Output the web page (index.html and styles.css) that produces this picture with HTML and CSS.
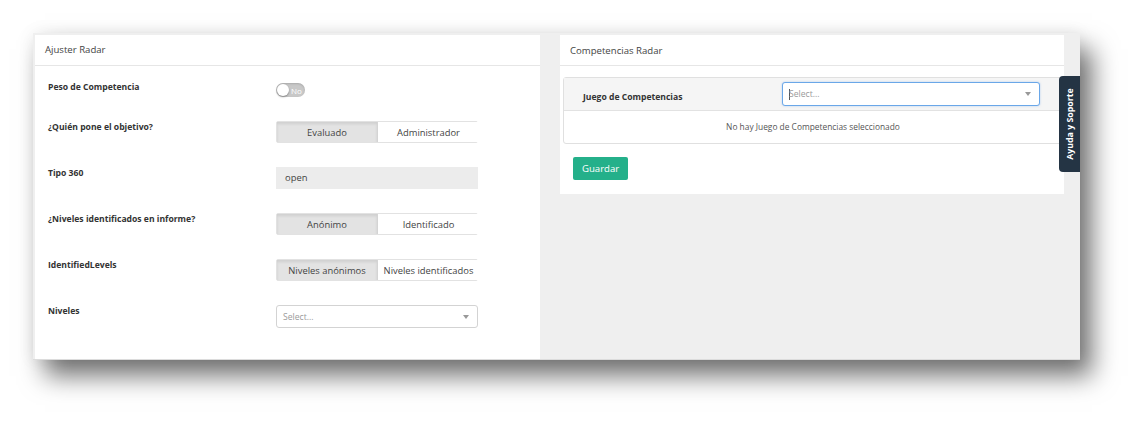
FILE: index.html
```html
<!DOCTYPE html>
<html lang="es">
<head>
<meta charset="utf-8">
<title>Radar</title>
<link rel="stylesheet" href="styles.css">
</head>
<body>
<div class="stage">
  <div class="window">
    <section class="panel panel-left">
      <header class="panel-head">Ajuster Radar</header>
      <div class="panel-body">
        <div class="row row-toggle">
          <div class="label">Peso de Competencia</div>
          <div class="control">
            <span class="toggle"><span class="knob"></span><span class="toggle-text">No</span></span>
          </div>
        </div>
        <div class="row">
          <div class="label">¿Quién pone el objetivo?</div>
          <div class="control btn-group">
            <span class="seg active">Evaluado</span><span class="seg">Administrador</span>
          </div>
        </div>
        <div class="row">
          <div class="label">Tipo 360</div>
          <div class="control readonly">open</div>
        </div>
        <div class="row">
          <div class="label">¿Niveles identificados en informe?</div>
          <div class="control btn-group">
            <span class="seg active">Anónimo</span><span class="seg">Identificado</span>
          </div>
        </div>
        <div class="row">
          <div class="label">IdentifiedLevels</div>
          <div class="control btn-group">
            <span class="seg active">Niveles anónimos</span><span class="seg">Niveles identificados</span>
          </div>
        </div>
        <div class="row">
          <div class="label">Niveles</div>
          <div class="control select"><span class="placeholder">Select...</span><span class="caret"></span></div>
        </div>
      </div>
    </section>
    <section class="panel panel-right">
      <header class="panel-head">Competencias Radar</header>
      <div class="panel-body-right">
        <div class="box">
          <div class="box-head">
            <div class="box-label">Juego de Competencias</div>
            <div class="select focused"><span class="cursor"></span><span class="placeholder">Select...</span><span class="caret"></span></div>
          </div>
          <div class="box-row">No hay Juego de Competencias seleccionado</div>
        </div>
        <button class="btn-save" type="button">Guardar</button>
      </div>
    </section>
  </div>
  <div class="help-tab"><span>Ayuda y Soporte</span></div>
</div>
</body>
</html>
```

FILE: styles.css
```css
html, body {
  margin: 0;
  padding: 0;
  background: #ffffff;
  font-family: "Open Sans", "Noto Sans", sans-serif;
  color: #333;
}

.stage {
  position: relative;
  width: 1145px;
  height: 425px;
  padding: 33px 0 0 33px;
  box-sizing: border-box;
}

.window {
  width: 1047px;
  height: 327px;
  background: #efefef;
  box-sizing: border-box;
  padding: 2px 16px 1px 2px;
  display: grid;
  grid-template-columns: 505px 504px;
  column-gap: 20px;
  align-items: start;
  border-bottom: 1px solid #dcdcdc;
  box-shadow: 0 0 16px rgba(0, 0, 0, 0.07), 12px 16px 24px 0 rgba(0, 0, 0, 0.55);
}

.panel {
  background: #fff;
}

.panel-left {
  height: 324px;
}

.panel-head {
  height: 30px;
  line-height: 30px;
  border-bottom: 1px solid #e6e6e6;
  padding-left: 10px;
  font-size: 9.6px;
  color: #444;
}

.panel-right .panel-head {
  margin-top: 1px;
  height: 29px;
}

.panel-body {
  padding: 17px 0 0 13px;
}

.row {
  display: grid;
  grid-template-columns: 228px 202px;
  align-items: start;
  margin-bottom: 24px;
}

.label {
  font-size: 8.6px;
  font-weight: 700;
  color: #333;
  line-height: 12px;
}

.row-toggle .label {
  margin-top: -2px;
}

.control {
  height: 22px;
  box-sizing: border-box;
  font-size: 9.4px;
}

.row-toggle .control {
  height: 14px;
}

.toggle {
  display: inline-flex;
  align-items: center;
  width: 29px;
  height: 14px;
  border-radius: 7px;
  background: #c8c8c8;
  box-shadow: inset 0 1px 2px rgba(0, 0, 0, 0.15);
}

.knob {
  width: 12px;
  height: 12px;
  border-radius: 50%;
  background: #fff;
  margin-left: 1px;
  box-shadow: 0 1px 2px rgba(0, 0, 0, 0.35);
}

.toggle-text {
  color: #fff;
  font-size: 8px;
  margin-left: 2px;
}

.btn-group {
  display: grid;
  grid-template-columns: 101px 101px;
  border: 1px solid #e2e2e2;
  border-radius: 2px;
  height: 22px;
}

.seg {
  display: flex;
  align-items: center;
  justify-content: center;
  color: #444;
  background: #fff;
  white-space: nowrap;
  font-size: 9.4px;
}

.seg.active {
  background: #e3e3e3;
  box-shadow: inset 0 2px 3px rgba(0, 0, 0, 0.09);
  border-right: 1px solid #d4d4d4;
}

.readonly {
  background: #ececec;
  padding-left: 9px;
  line-height: 22px;
  color: #444;
}

.select {
  position: relative;
  display: flex;
  align-items: center;
  background: #fff;
  border: 1px solid #d3d3d3;
  border-radius: 3px;
  height: 23px;
  padding-left: 6px;
  box-sizing: border-box;
}

.placeholder {
  color: #9a9a9a;
  font-size: 8.6px;
}

.caret {
  position: absolute;
  right: 8px;
  top: 9px;
  width: 0;
  height: 0;
  border-left: 3.5px solid transparent;
  border-right: 3.5px solid transparent;
  border-top: 4px solid #999;
}

.panel-body-right {
  padding: 11px 1px 14px 3px;
}

.box {
  border: 1px solid #e0e0e0;
  border-radius: 3px;
}

.box-head {
  display: grid;
  grid-template-columns: 199px 258px;
  align-items: center;
  background: #f5f5f5;
  height: 32px;
  border-bottom: 1px solid #e2e2e2;
  padding-left: 19px;
}

.box-label {
  font-size: 8.6px;
  font-weight: 700;
  color: #333;
  padding-top: 6px;
}

.select.focused {
  border-color: #6aa7e8;
  box-shadow: 0 0 2px rgba(102, 160, 233, 0.5);
  padding-left: 6px;
  height: 24px;
}

.cursor {
  display: inline-block;
  width: 1px;
  height: 11px;
  background: #555;
  margin-right: -1px;
}

.box-row {
  height: 32px;
  line-height: 32px;
  text-align: center;
  font-size: 8.4px;
  color: #555;
}

.btn-save {
  display: block;
  margin: 13px 0 0 10px;
  height: 23px;
  padding: 0 9px;
  border: 0;
  border-radius: 2px;
  background: #24b08a;
  color: #fff;
  font-family: "Open Sans", "Noto Sans", sans-serif;
  font-size: 9.6px;
}

.help-tab {
  position: absolute;
  left: 1059px;
  top: 76px;
  width: 21px;
  height: 96px;
  background: #243444;
  border-radius: 4px 0 0 4px;
  display: flex;
  align-items: center;
  justify-content: center;
}

.help-tab span {
  transform: rotate(-90deg);
  white-space: nowrap;
  color: #fff;
  font-weight: 700;
  font-size: 8.8px;
}
```
